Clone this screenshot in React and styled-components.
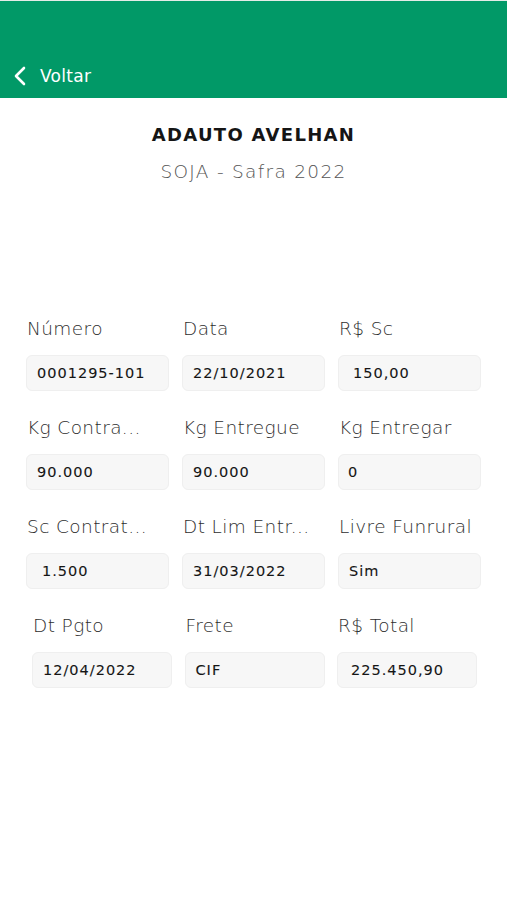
import React from "react";
import styled, { createGlobalStyle } from "styled-components";

const Global = createGlobalStyle`
  html, body { margin: 0; padding: 0; background: #ffffff; }
  body { font-family: "DejaVu Sans", "Liberation Sans", sans-serif; }
`;

const Page = styled.div`
  width: 507px;
  min-height: 900px;
  background: #fff;
  display: flex;
  flex-direction: column;
`;

const Header = styled.header`
  height: 98px;
  border-top: 1px solid #e4ece8;
  background: #019967;
  display: flex;
  align-items: flex-end;
  padding: 0 0 12px 12px;
  box-sizing: border-box;
`;

const Back = styled.button`
  display: flex;
  align-items: center;
  gap: 12px;
  background: none;
  border: 0;
  padding: 0;
  color: #fff;
  font-family: "DejaVu Sans", sans-serif;
  font-size: 17px;
  letter-spacing: 0.3px;
  cursor: pointer;
`;

const Titles = styled.div`
  display: flex;
  flex-direction: column;
  align-items: center;
  padding-top: 24px;
`;

const Name = styled.h1`
  margin: 0;
  font-family: "DejaVu Sans", sans-serif;
  font-weight: 700;
  font-size: 18px;
  letter-spacing: 1.3px;
  color: #151515;
  line-height: 26px;
`;

const Sub = styled.div`
  margin-top: 12px;
  font-family: "DejaVu Sans", sans-serif;
  font-weight: 300;
  font-size: 18.5px;
  letter-spacing: 1.3px;
  color: #555;
  line-height: 24px;
`;

const Form = styled.div`
  display: flex;
  flex-direction: column;
  gap: 24px;
  padding-top: 132px;
`;

const Row = styled.div`
  display: grid;
  grid-template-columns: repeat(3, ${(p) => p.$col || 143}px);
  column-gap: ${(p) => p.$gap || 13}px;
  padding-left: ${(p) => p.$left || 26}px;
`;

const Field = styled.div`
  display: flex;
  flex-direction: column;
  gap: 13px;
`;

const Label = styled.div`
  font-family: "DejaVu Sans", sans-serif;
  font-weight: 200;
  font-size: 18.5px;
  letter-spacing: 0.4px;
  color: #2e2e2e;
  line-height: 26px;
  white-space: nowrap;
  padding-left: 1px;
`;

const Value = styled.div`
  height: 36px;
  box-sizing: border-box;
  background: #f7f7f7;
  border: 1px solid #efefef;
  border-radius: 6px;
  display: flex;
  align-items: center;
  padding-left: ${(p) => p.$pad || 10}px;
  font-family: "DejaVu Sans", sans-serif;
  font-size: 14.5px;
  font-weight: 500;
  letter-spacing: 1px;
  color: #151515;
  -webkit-text-stroke: 0.1px #151515;
`;

const Chevron = () => (
  <svg width="16" height="20" viewBox="0 0 16 20" fill="none">
    <path d="M12 2 L4 10 L12 18" stroke="#fff" strokeWidth="2.6" strokeLinecap="round" strokeLinejoin="round" />
  </svg>
);

const rows = [
  {
    fields: [
      ["Número", "0001295-101", 10],
      ["Data", "22/10/2021", 10],
      ["R$ Sc", "150,00", 14],
    ],
  },
  {
    fields: [
      ["Kg Contra...", "90.000", 10],
      ["Kg Entregue", "90.000", 10],
      ["Kg Entregar", "0", 9],
    ],
  },
  {
    fields: [
      ["Sc Contrat...", "1.500", 15],
      ["Dt Lim Entr...", "31/03/2022", 10],
      ["Livre Funrural", "Sim", 10],
    ],
  },
  {
    left: 32,
    col: 140,
    gap: 12.5,
    fields: [
      ["Dt Pgto", "12/04/2022", 10],
      ["Frete", "CIF", 10],
      ["R$ Total", "225.450,90", 13],
    ],
  },
];

export default function App() {
  return (
    <>
      <Global />
      <Page>
        <Header>
          <Back>
            <Chevron />
            Voltar
          </Back>
        </Header>
        <Titles>
          <Name>ADAUTO AVELHAN</Name>
          <Sub>SOJA - Safra 2022</Sub>
        </Titles>
        <Form>
          {rows.map((r, i) => (
            <Row key={i} $left={r.left} $col={r.col} $gap={r.gap}>
              {r.fields.map(([l, v, p]) => (
                <Field key={l}>
                  <Label>{l}</Label>
                  <Value $pad={p}>{v}</Value>
                </Field>
              ))}
            </Row>
          ))}
        </Form>
      </Page>
    </>
  );
}
